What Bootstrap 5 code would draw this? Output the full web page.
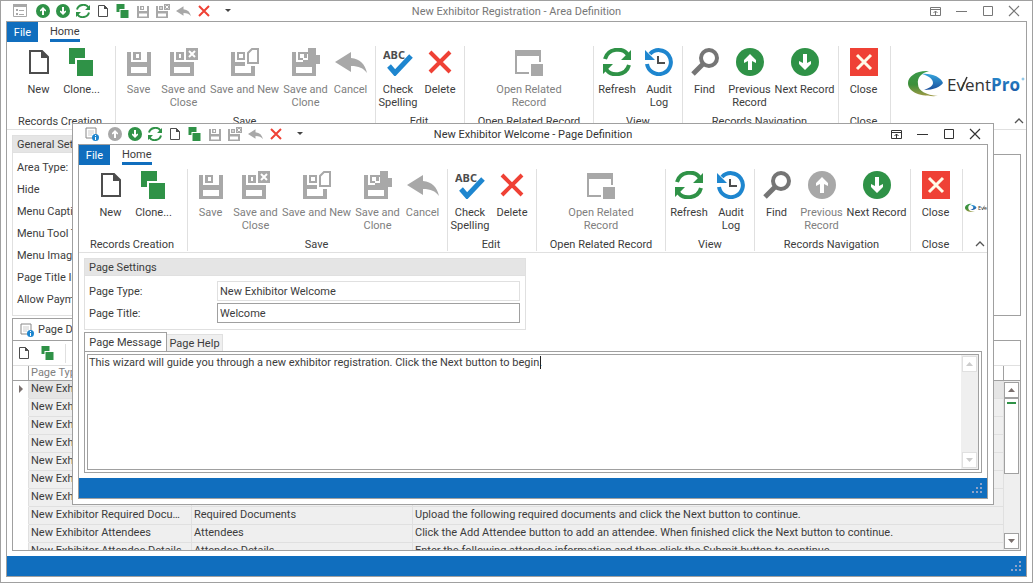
<!DOCTYPE html>
<html lang="en">
<head>
<meta charset="utf-8">
<meta name="viewport" content="width=device-width, initial-scale=1">
<title>New Exhibitor Registration - Area Definition</title>
<link href="https://cdn.jsdelivr.net/npm/bootstrap@5.3.0/dist/css/bootstrap.min.css" rel="stylesheet">
<style>
  :root { --line: #a0a0a0; --soft: #e0e0e0; --fill: #e5e5e5; --blue: #106ebe; --ink: #3c3c3c; --dim: #808080; }
  body { font: 11px/13px Roboto, "Liberation Sans", sans-serif; color: var(--ink); background: #fff; }
  button { font: inherit; color: inherit; background: none; border: 0; padding: 0; }
  svg { display: block; flex: none; }
  .win { border: 1px solid var(--line); background: #fff; padding: 0 5px 5px; overflow: hidden; }
  .win-main { height: 100vh; min-height: 560px; }
  .win-dialog { top: 122px; left: 71px; right: 38px; bottom: 77px; z-index: 10; }
  .titlebar { height: 20px; flex: none; }
  .titlebar h1 { font: inherit; margin: 0; }
  .win-main .titlebar h1, .win-main .win-tools { color: #777; }
  .win-dialog .titlebar h1, .win-dialog .win-tools { color: #333; }
  .quick { gap: 6px; padding-left: 7px; }
  .win-icon { margin-right: 3px; }
  .win-tools { gap: 13px; padding-right: 7px; }
  .frame { border: 1px solid var(--line); min-height: 0; }
  .menu-tabs { height: 20px; flex: none; }
  .file-tab { background: var(--blue); color: #fff; width: 31px; height: 20px; }
  .home-tab { margin-left: 12px; border-bottom: 3px solid var(--blue); height: 20px; padding-top: 3px; color: var(--ink); text-decoration: none; }
  .ribbon { height: 88px; flex: none; padding-top: 4px; border-bottom: 1px solid var(--soft); overflow: hidden; }
  .grp { height: 82px; flex: none; border-right: 1px solid var(--soft); padding: 2px 2px 0 0; text-align: center; }
  .g-108 { width: 109px; } .g-260 { width: 260px; } .g-89 { width: 89px; }
  .g-129 { width: 129px; } .g-156 { width: 156px; } .g-52 { width: 52px; }
  .g-129, .g-view { padding-right: 0; }
  .cmd { display: flex; flex-direction: column; align-items: center; gap: 7px; width: 42px; white-space: nowrap; }
  .cmd:disabled { color: var(--dim); }
  .cmd span { display: flex; flex-direction: column; align-items: center; }
  .w-new { width: 43px; } .w-name { width: 48px; } .w-long { width: 74px; } .w-next { width: 62px; } .w-wide { width: 90px; }
  .collapse-btn { right: 1px; bottom: 4px; }
  .panel { border: 1px solid var(--soft); }
  .panel-head { background: var(--fill); height: 17px; padding-left: 4px; line-height: 17px; border-bottom: 1px solid var(--soft); }
  .body-pad { padding: 5px; min-height: 0; }
  .prop { height: 22px; line-height: 22px; padding-left: 4px; }
  .memo { border: 1px solid var(--line); margin-top: 19px; }
  .pages-tab { border: 1px solid var(--line); border-bottom: 0; height: 22px; width: 120px; margin-top: 2px; padding-left: 7px; flex: none; }
  .grid-box { border: 1px solid var(--line); min-height: 0; overflow: hidden; }
  .grid-tools { height: 25px; border-bottom: 1px solid var(--soft); padding-left: 4px; gap: 10px; flex: none; }
  .tool-sep { height: 19px; border-left: 1px solid var(--soft); }
  .pages { table-layout: fixed; width: 100%; border-collapse: separate; border-spacing: 0; }
  .pages th { height: 15px; font-weight: 400; color: var(--dim); border-bottom: 1px solid var(--line); border-right: 1px solid var(--line); padding: 0 0 0 2px; line-height: 14px; background: #fff; }
  .pages td { height: 18px; line-height: 16px; padding: 0 2px 1px 2px; background: #efefef; border-right: 1px solid var(--soft); border-bottom: 1px solid var(--soft); white-space: nowrap; overflow: hidden; text-overflow: ellipsis; }
  .pages tr.current td { background: var(--fill); }
  .pages tr td:first-child, .pages tr.current td:first-child { background: #fff; border-bottom-color: #fff; padding-left: 5px; }
  .c-mark { width: 16px; } .c-type { width: 163px; } .c-title { width: 221px; }
  .vbar { background: #efefef; flex: none; }
  .vbar button { width: 15px; height: 16px; border: 1px solid var(--line); background: #fff; display: flex; align-items: center; justify-content: center; color: #7a706e; flex: none; }
  .grid-rail { width: 16px; padding-bottom: 1px; }
  .grid-rail-head { height: 15px; background: #fff; border-bottom: 1px solid var(--line); margin-bottom: 1px; flex: none; }
  .thumb { width: 15px; height: 76px; border: 1px solid var(--line); background: #fff; padding: 3px 2px; flex: none; }
  .thumb i { display: block; height: 2px; background: #2f9247; }
  .status { height: 20px; background: var(--blue); flex: none; color: #8fa3c9; }
  .settings { max-width: 442px; }
  .field-row label { width: 132px; padding-left: 4px; flex: none; }
  .field-row input { height: 20px; border: 1px solid var(--line); padding: 0 2px; color: var(--ink); min-width: 0; outline: 0; }
  .field-row input[readonly] { border-color: var(--soft); }
  .fields { padding: 5px 5px 6px 0; gap: 2px; }
  .msg-tabs { margin-top: 2px; margin-bottom: -1px; flex: none; }
  .msg-tabs button { border: 1px solid var(--soft); background: #efefef; width: 56px; height: 18px; border-left: 0; border-bottom: 1px solid var(--line); }
  .msg-tabs button.active { border: 1px solid var(--line); border-bottom-color: #fff; background: #fff; height: 20px; width: 83px; }
  .msg-box { border: 1px solid var(--line); padding: 2px; min-height: 0; }
  .msg-edit { border: 1px solid var(--line); }
  .msg-edit textarea { border: 0; resize: none; outline: 0; padding: 1px; color: var(--ink); overflow: hidden; line-height: 13px; }
  .caret { left: 452px; top: 1px; width: 1px; height: 13px; background: #222; }
  .edit-rail { width: 17px; padding: 1px; }
  .edit-rail button { border-color: var(--soft); color: #ccc; }
  .brand { padding-left: 17px; padding-top: 20px; flex: none; }
  .brand-mini { padding: 33px 0 0 2px; }
  .brand text, .brand-mini text { font-family: "Open Sans", sans-serif; font-size: 17px; }
</style>
</head>
<body>
<svg width="0" height="0" class="position-absolute" aria-hidden="true">
  <defs>
    <linearGradient id="lg1" x1="0" y1="0" x2="0" y2="1"><stop offset="0" stop-color="#3a9a4a"/><stop offset=".55" stop-color="#3c8f3a"/><stop offset="1" stop-color="#a09a45"/></linearGradient>
    <linearGradient id="lg2" x1="0" y1="0" x2="0" y2="1"><stop offset="0" stop-color="#35a4dc"/><stop offset="1" stop-color="#1a4f9c"/></linearGradient>
    <linearGradient id="lg3" x1="0" y1="0" x2="0" y2="1"><stop offset="0" stop-color="#2a93d4"/><stop offset="1" stop-color="#1a4f9c"/></linearGradient>
  </defs>
  <symbol id="doc" viewBox="0 0 28 28"><path d="M5 3h12l6 6v16H5z" fill="#fff" stroke="#4d4d4d" stroke-width="2"/><path d="M16 2v8h8z" fill="#4d4d4d"/></symbol>
  <symbol id="clone" viewBox="0 0 28 28"><path fill="#2f9247" d="M1 0h16v10H7v6H1zM9 12h16v16H9z"/></symbol>
  <symbol id="save" viewBox="0 0 28 28"><path fill="#a8a8a8" fill-rule="evenodd" d="M2 4h4v10h16V4h4v24H2zM6 19v6h16v-6zM8 4h8v8H8zM11 6v4h3V6z"/></symbol>
  <symbol id="saveclose" viewBox="0 0 28 28"><path fill="#a8a8a8" fill-rule="evenodd" d="M0 4h4v10h16v0h4v14H0zM4 19v6h16v-6zM6 4h8v8H6zM9 6v4h2V6z"/><path fill="#a8a8a8" d="M16 0h12v12H16z"/><path d="m19 3 6 6m0-6-6 6" stroke="#fff" stroke-width="2"/></symbol>
  <symbol id="savenew" viewBox="0 0 28 28"><path fill="#a8a8a8" fill-rule="evenodd" d="M0 4h4v10h10v4H4v7h16v-7h4v10H0zM6 4h8v8H6zM8 6v4h4V6z"/><path fill="#fff" stroke="#a8a8a8" stroke-width="2" d="M21 1h6v14H17V5z"/></symbol>
  <symbol id="saveclone" viewBox="0 0 28 28"><path fill="#a8a8a8" fill-rule="evenodd" d="M0 4h4v10h7v-4h5V0h8v7h5v9h-5v12H0zM4 19v6h16v-6zM6 4h10v8H6zM8 6v4h4V6z"/><path fill="#fff" d="M12 10h3V6h1v5h-4z"/></symbol>
  <symbol id="undo" viewBox="0 0 32 28"><path fill="#a8a8a8" d="M0 14 16 4v6c9 1 14 6 16 15-4-5-8-7-16-7v6z"/></symbol>
  <symbol id="spell" viewBox="0 0 30 28"><path d="m6 18 6 7L28 8" fill="none" stroke="#1e86cf" stroke-width="5"/><text x="0" y="11" font-family="Noto Sans" font-weight="700" font-size="11" fill="#4d4d4d">ABC</text></symbol>
  <symbol id="del" viewBox="0 0 28 28"><path d="m4 4 20 20M24 4 4 24" stroke="#ef4135" stroke-width="4"/></symbol>
  <symbol id="related" viewBox="0 0 28 28"><path fill="#a8a8a8" d="M0 2h26v12h-2V8H2v16h12v2H0zM16 16h12v12H16z"/></symbol>
  <symbol id="refresh" viewBox="0 0 28 28"><g fill="none" stroke="#2f9247" stroke-width="4"><path d="M2 11C5 0 20-1 25 7"/><path d="M26 17C23 28 8 29 3 21"/></g><path fill="#2f9247" d="M28 2v10H18zM0 26V16h10z"/></symbol>
  <symbol id="audit" viewBox="0 0 28 28"><path d="M5 6a12 12 0 1 1-3 10" fill="none" stroke="#1e86cf" stroke-width="4"/><path fill="#1e86cf" d="M0 2v10h10z"/><path d="M13 8v7h7" fill="none" stroke="#4d4d4d" stroke-width="2"/></symbol>
  <symbol id="find" viewBox="0 0 28 28"><circle cx="18" cy="10" r="8" fill="none" stroke="#757575" stroke-width="4"/><path d="M12 16 2 26" stroke="#757575" stroke-width="5"/></symbol>
  <symbol id="up" viewBox="0 0 28 28"><circle cx="14" cy="14" r="14" fill="currentColor"/><path fill="#fff" d="m14 6 6 6v3l-4-2v9h-4v-9l-4 2v-3z"/></symbol>
  <symbol id="down" viewBox="0 0 28 28"><circle cx="14" cy="14" r="14" fill="currentColor"/><path fill="#fff" d="m14 22 6-6v-3l-4 2V6h-4v9l-4-2v3z"/></symbol>
  <symbol id="closebox" viewBox="0 0 28 28"><path fill="#ef4135" d="M0 0h28v28H0z"/><path d="m7 7 14 14m0-14L7 21" stroke="#fffbe8" stroke-width="3"/></symbol>
  <symbol id="form" viewBox="0 0 14 14"><path d="M.5.5h13v12H.5z" fill="#fff" stroke="#a8a8a8"/><path fill="#a8a8a8" d="M0 0h14v3H0zM3 5h2v2H3zM3 9h2v2H3zM6 6h5v1H6zM6 10h5v1H6z"/></symbol>
  <symbol id="pageinfo" viewBox="0 0 14 14"><path d="M1 1h10v10H1z" fill="#fff" stroke="#888"/><path d="M3 4h6M3 6h6M3 8h4" stroke="#ccc"/><circle cx="10.500" cy="10.500" r="3.500" fill="#1e86cf"/><path d="M10 8h1v1h-1zM10 10h1v3h-1z" fill="#fff"/></symbol>
  <symbol id="pin" viewBox="0 0 13 13"><path d="M1.500 2.500h10v8h-10zM1 4.500h11M6.500 10V6M4.500 8l2-2 2 2" fill="none" stroke="currentColor"/></symbol>
  <symbol id="min" viewBox="0 0 13 13"><path d="M1 6.500h11" stroke="currentColor"/></symbol>
  <symbol id="max" viewBox="0 0 13 13"><path d="M2.500 1.500h9v9h-9z" fill="none" stroke="currentColor"/></symbol>
  <symbol id="x" viewBox="0 0 13 13"><path d="m2 1 10 10M12 1 2 11" stroke="currentColor" stroke-width="1.200"/></symbol>
  <symbol id="chev" viewBox="0 0 12 8"><path d="m2 6 4-4 4 4" fill="none" stroke="#555" stroke-width="1.300"/></symbol>
  <symbol id="tri" viewBox="0 0 8 4"><path d="M0 0h6L3 3z" fill="#444"/></symbol>
  <symbol id="tu" viewBox="0 0 8 4"><path d="M0 4h7L3.500 0z" fill="currentColor"/></symbol>
  <symbol id="td" viewBox="0 0 8 4"><path d="M0 0h7L3.500 4z" fill="currentColor"/></symbol>
  <symbol id="grip" viewBox="0 0 12 12"><path fill="currentColor" d="M9 1h2v2H9zM5 5h2v2H5zM9 5h2v2H9zM1 9h2v2H1zM5 9h2v2H5zM9 9h2v2H9z"/></symbol>
  <symbol id="swirl" viewBox="0 0 36 28"><path fill="url(#lg1)" d="M21 1C9 0 0 6 0 13c0 9 12 14 30 13-12-1-20-5-20-12C9 8 13 3 21 1z"/><path fill="url(#lg2)" d="M14 4c9-1 19 3 21 9-3 4-9 7-19 7 5-2 9-4 9-7 0-4-4-7-11-9z"/></symbol>
</svg>

<main class="win win-main position-relative d-flex flex-column">
  <header class="titlebar d-flex align-items-center position-relative">
    <div class="quick d-flex align-items-center">
      <svg class="win-icon" width="14" height="14"><use href="#form"/></svg>
      <button aria-label="Previous" style="color:#2f9247"><svg width="14" height="14"><use href="#up"/></svg></button>
      <button aria-label="Next" style="color:#2f9247"><svg width="14" height="14"><use href="#down"/></svg></button>
      <button aria-label="Refresh"><svg width="14" height="14"><use href="#refresh"/></svg></button>
      <button aria-label="New"><svg width="14" height="14"><use href="#doc"/></svg></button>
      <button aria-label="Clone"><svg width="14" height="14"><use href="#clone"/></svg></button>
      <button aria-label="Save"><svg width="14" height="14"><use href="#save"/></svg></button>
      <button aria-label="Save and Close"><svg width="14" height="14"><use href="#saveclose"/></svg></button>
      <button aria-label="Cancel"><svg width="15" height="14"><use href="#undo"/></svg></button>
      <button aria-label="Delete"><svg width="14" height="14"><use href="#del"/></svg></button>
      <button aria-label="Customize" class="ms-2"><svg width="8" height="4"><use href="#tri"/></svg></button>
    </div>
    <h1 class="position-absolute start-50 translate-middle-x">New Exhibitor Registration - Area Definition</h1>
    <div class="win-tools d-flex ms-auto">
      <button aria-label="Pin"><svg width="13" height="13"><use href="#pin"/></svg></button>
      <button aria-label="Minimize"><svg width="13" height="13"><use href="#min"/></svg></button>
      <button aria-label="Maximize"><svg width="13" height="13"><use href="#max"/></svg></button>
      <button aria-label="Close window"><svg width="13" height="13"><use href="#x"/></svg></button>
    </div>
  </header>
  <div class="frame d-flex flex-column flex-grow-1">
    <nav class="menu-tabs d-flex">
      <button class="file-tab">File</button>
      <a href="#" class="home-tab">Home</a>
    </nav>
    <section class="ribbon d-flex position-relative">
      <div class="grp g-108 d-flex flex-column justify-content-between">
        <div class="d-flex justify-content-center">
          <button class="cmd w-new"><svg width="28" height="28"><use href="#doc"/></svg><span>New</span></button>
          <button class="cmd w-new"><svg width="28" height="28"><use href="#clone"/></svg><span>Clone...</span></button>
        </div>
        <div>Records Creation</div>
      </div>
      <div class="grp g-260 d-flex flex-column justify-content-between">
        <div class="d-flex justify-content-center">
          <button class="cmd" disabled><svg width="28" height="28"><use href="#save"/></svg><span>Save</span></button>
          <button class="cmd w-name" disabled><svg width="28" height="28"><use href="#saveclose"/></svg><span>Save and<br>Close</span></button>
          <button class="cmd w-long" disabled><svg width="28" height="28"><use href="#savenew"/></svg><span>Save and New</span></button>
          <button class="cmd w-name" disabled><svg width="28" height="28"><use href="#saveclone"/></svg><span>Save and<br>Clone</span></button>
          <button class="cmd" disabled><svg width="32" height="28"><use href="#undo"/></svg><span>Cancel</span></button>
        </div>
        <div>Save</div>
      </div>
      <div class="grp g-89 d-flex flex-column justify-content-between">
        <div class="d-flex justify-content-center">
          <button class="cmd"><svg width="30" height="28"><use href="#spell"/></svg><span>Check<br>Spelling</span></button>
          <button class="cmd"><svg width="28" height="28"><use href="#del"/></svg><span>Delete</span></button>
        </div>
        <div>Edit</div>
      </div>
      <div class="grp g-129 d-flex flex-column justify-content-between">
        <div class="d-flex justify-content-center">
          <button class="cmd w-wide" disabled><svg width="28" height="28"><use href="#related"/></svg><span>Open Related<br>Record</span></button>
        </div>
        <div>Open Related Record</div>
      </div>
      <div class="grp g-89 g-view d-flex flex-column justify-content-between">
        <div class="d-flex justify-content-center">
          <button class="cmd"><svg width="28" height="28"><use href="#refresh"/></svg><span>Refresh</span></button>
          <button class="cmd"><svg width="28" height="28"><use href="#audit"/></svg><span>Audit<br>Log</span></button>
        </div>
        <div>View</div>
      </div>
      <div class="grp g-156 d-flex flex-column justify-content-between">
        <div class="d-flex justify-content-center">
          <button class="cmd"><svg width="28" height="28"><use href="#find"/></svg><span>Find</span></button>
          <button class="cmd w-name"><svg width="28" height="28" color="#2f9247"><use href="#up"/></svg><span>Previous<br>Record</span></button>
          <button class="cmd w-next"><svg width="28" height="28" color="#2f9247"><use href="#down"/></svg><span>Next Record</span></button>
        </div>
        <div>Records Navigation</div>
      </div>
      <div class="grp g-52 d-flex flex-column justify-content-between">
        <div class="d-flex justify-content-center">
          <button class="cmd"><svg width="28" height="28"><use href="#closebox"/></svg><span>Close</span></button>
        </div>
        <div>Close</div>
      </div>
      <div class="brand">
        <svg width="118" height="36" viewBox="0 0 118 36" role="img" aria-label="EventPro">
          <use href="#swirl" x="0" y="4" width="36" height="28"/>
          <text x="39" y="25" fill="#333">Event<tspan fill="url(#lg3)" font-weight="700">Pro</tspan></text>
          <path d="m53 24 6-13" stroke="#333" stroke-width="1.500"/>
          <circle cx="115" cy="13" r="1" fill="none" stroke="#2a93d4" stroke-width=".6"/>
        </svg>
      </div>
      <button class="collapse-btn position-absolute" aria-label="Collapse ribbon"><svg width="12" height="8"><use href="#chev"/></svg></button>
    </section>

    <div class="body-pad d-flex flex-column flex-grow-1">
      <div class="d-flex gap-2">
        <section class="panel w-50">
          <div class="panel-head">General Settings</div>
          <div class="pt-1 pb-1">
            <div class="prop">Area Type:</div>
            <div class="prop">Hide</div>
            <div class="prop">Menu Caption:</div>
            <div class="prop">Menu Tool Tip:</div>
            <div class="prop">Menu Image:</div>
            <div class="prop">Page Title Image:</div>
            <div class="prop">Allow Payment:</div>
          </div>
        </section>
        <div class="memo flex-grow-1"></div>
      </div>
      <div class="pages-tab d-flex align-items-center gap-1"><svg width="14" height="14"><use href="#pageinfo"/></svg><span>Page Definitions</span></div>
      <div class="grid-box d-flex flex-column flex-grow-1">
        <div class="grid-tools d-flex align-items-center">
          <button aria-label="New page"><svg width="14" height="14"><use href="#doc"/></svg></button>
          <button aria-label="Clone page"><svg width="14" height="14"><use href="#clone"/></svg></button>
          <span class="tool-sep"></span>
        </div>
        <div class="d-flex flex-grow-1 overflow-hidden">
          <div class="flex-grow-1 overflow-hidden">
            <table class="pages">
              <colgroup><col class="c-mark"><col class="c-type"><col class="c-title"><col></colgroup>
              <thead><tr><th></th><th>Page Type</th><th>Page Title</th><th>Page Message</th></tr></thead>
              <tbody>
                <tr class="current"><td><svg width="6" height="8"><path d="M1 0v8l4-4z" fill="#7a706e"/></svg></td><td>New Exhibitor Welcome</td><td>Welcome</td><td></td></tr>
                <tr><td></td><td>New Exhibitor Company</td><td>Company</td><td></td></tr>
                <tr><td></td><td>New Exhibitor Contact</td><td>Contact</td><td></td></tr>
                <tr><td></td><td>New Exhibitor Details</td><td>Details</td><td></td></tr>
                <tr><td></td><td>New Exhibitor Booths</td><td>Booths</td><td></td></tr>
                <tr><td></td><td>New Exhibitor Items</td><td>Items</td><td></td></tr>
                <tr><td></td><td>New Exhibitor Payment</td><td>Payment</td><td></td></tr>
                <tr><td></td><td>New Exhibitor Required Documents</td><td>Required Documents</td><td>Upload the following required documents and click the Next button to continue.</td></tr>
                <tr><td></td><td>New Exhibitor Attendees</td><td>Attendees</td><td>Click the Add Attendee button to add an attendee. When finished click the Next button to continue.</td></tr>
                <tr><td></td><td>New Exhibitor Attendee Details</td><td>Attendee Details</td><td>Enter the following attendee information and then click the Submit button to continue.</td></tr>
              </tbody>
            </table>
          </div>
          <div class="vbar grid-rail d-flex flex-column">
            <div class="grid-rail-head"></div>
            <button aria-label="Scroll up"><svg width="8" height="4"><use href="#tu"/></svg></button>
            <div class="thumb"><i></i></div>
            <button class="mt-auto" aria-label="Scroll down"><svg width="8" height="4"><use href="#td"/></svg></button>
          </div>
        </div>
      </div>
    </div>
    <footer class="status d-flex justify-content-end align-items-center pe-1"><svg width="12" height="12"><use href="#grip"/></svg></footer>
  </div>

  <section class="win win-dialog position-absolute d-flex flex-column" role="dialog" aria-label="New Exhibitor Welcome - Page Definition">
    <header class="titlebar d-flex align-items-center position-relative">
      <div class="quick d-flex align-items-center">
        <svg class="win-icon" width="14" height="14"><use href="#pageinfo"/></svg>
        <button aria-label="Previous" disabled style="color:#a8a8a8"><svg width="14" height="14"><use href="#up"/></svg></button>
        <button aria-label="Next" style="color:#2f9247"><svg width="14" height="14"><use href="#down"/></svg></button>
        <button aria-label="Refresh"><svg width="14" height="14"><use href="#refresh"/></svg></button>
        <button aria-label="New"><svg width="14" height="14"><use href="#doc"/></svg></button>
        <button aria-label="Clone"><svg width="14" height="14"><use href="#clone"/></svg></button>
        <button aria-label="Save"><svg width="14" height="14"><use href="#save"/></svg></button>
        <button aria-label="Save and Close"><svg width="14" height="14"><use href="#saveclose"/></svg></button>
        <button aria-label="Cancel"><svg width="15" height="14"><use href="#undo"/></svg></button>
        <button aria-label="Delete"><svg width="14" height="14"><use href="#del"/></svg></button>
        <button aria-label="Customize" class="ms-2"><svg width="8" height="4"><use href="#tri"/></svg></button>
      </div>
      <h1 class="position-absolute start-50 translate-middle-x">New Exhibitor Welcome - Page Definition</h1>
      <div class="win-tools d-flex ms-auto">
        <button aria-label="Pin"><svg width="13" height="13"><use href="#pin"/></svg></button>
        <button aria-label="Minimize"><svg width="13" height="13"><use href="#min"/></svg></button>
        <button aria-label="Maximize"><svg width="13" height="13"><use href="#max"/></svg></button>
        <button aria-label="Close window"><svg width="13" height="13"><use href="#x"/></svg></button>
      </div>
    </header>
    <div class="frame d-flex flex-column flex-grow-1">
      <nav class="menu-tabs d-flex">
        <button class="file-tab">File</button>
        <a href="#" class="home-tab">Home</a>
      </nav>
      <section class="ribbon d-flex position-relative">
        <div class="grp g-108 d-flex flex-column justify-content-between">
          <div class="d-flex justify-content-center">
            <button class="cmd w-new"><svg width="28" height="28"><use href="#doc"/></svg><span>New</span></button>
            <button class="cmd w-new"><svg width="28" height="28"><use href="#clone"/></svg><span>Clone...</span></button>
          </div>
          <div>Records Creation</div>
        </div>
        <div class="grp g-260 d-flex flex-column justify-content-between">
          <div class="d-flex justify-content-center">
            <button class="cmd" disabled><svg width="28" height="28"><use href="#save"/></svg><span>Save</span></button>
            <button class="cmd w-name" disabled><svg width="28" height="28"><use href="#saveclose"/></svg><span>Save and<br>Close</span></button>
            <button class="cmd w-long" disabled><svg width="28" height="28"><use href="#savenew"/></svg><span>Save and New</span></button>
            <button class="cmd w-name" disabled><svg width="28" height="28"><use href="#saveclone"/></svg><span>Save and<br>Clone</span></button>
            <button class="cmd" disabled><svg width="32" height="28"><use href="#undo"/></svg><span>Cancel</span></button>
          </div>
          <div>Save</div>
        </div>
        <div class="grp g-89 d-flex flex-column justify-content-between">
          <div class="d-flex justify-content-center">
            <button class="cmd"><svg width="30" height="28"><use href="#spell"/></svg><span>Check<br>Spelling</span></button>
            <button class="cmd"><svg width="28" height="28"><use href="#del"/></svg><span>Delete</span></button>
          </div>
          <div>Edit</div>
        </div>
        <div class="grp g-129 d-flex flex-column justify-content-between">
          <div class="d-flex justify-content-center">
            <button class="cmd w-wide" disabled><svg width="28" height="28"><use href="#related"/></svg><span>Open Related<br>Record</span></button>
          </div>
          <div>Open Related Record</div>
        </div>
        <div class="grp g-89 g-view d-flex flex-column justify-content-between">
          <div class="d-flex justify-content-center">
            <button class="cmd"><svg width="28" height="28"><use href="#refresh"/></svg><span>Refresh</span></button>
            <button class="cmd"><svg width="28" height="28"><use href="#audit"/></svg><span>Audit<br>Log</span></button>
          </div>
          <div>View</div>
        </div>
        <div class="grp g-156 d-flex flex-column justify-content-between">
          <div class="d-flex justify-content-center">
            <button class="cmd"><svg width="28" height="28"><use href="#find"/></svg><span>Find</span></button>
            <button class="cmd w-name" disabled><svg width="28" height="28" color="#a8a8a8"><use href="#up"/></svg><span>Previous<br>Record</span></button>
            <button class="cmd w-next"><svg width="28" height="28" color="#2f9247"><use href="#down"/></svg><span>Next Record</span></button>
          </div>
          <div>Records Navigation</div>
        </div>
        <div class="grp g-52 d-flex flex-column justify-content-between">
          <div class="d-flex justify-content-center">
            <button class="cmd"><svg width="28" height="28"><use href="#closebox"/></svg><span>Close</span></button>
          </div>
          <div>Close</div>
        </div>
        <div class="brand-mini">
          <svg width="39" height="12" viewBox="0 0 118 36" role="img" aria-label="EventPro">
            <use href="#swirl" x="0" y="4" width="36" height="28"/>
            <text x="39" y="25" fill="#333">Event<tspan fill="#1b63ad" font-weight="700">Pro</tspan></text>
            <path d="m53 24 6-13" stroke="#333" stroke-width="1.500"/>
          </svg>
        </div>
        <button class="collapse-btn position-absolute" aria-label="Collapse ribbon"><svg width="12" height="8"><use href="#chev"/></svg></button>
      </section>

      <div class="body-pad d-flex flex-column flex-grow-1">
        <section class="panel settings">
          <div class="panel-head">Page Settings</div>
          <div class="fields d-flex flex-column">
            <div class="field-row d-flex align-items-center"><label for="ptype">Page Type:</label><input id="ptype" class="flex-grow-1" value="New Exhibitor Welcome" readonly></div>
            <div class="field-row d-flex align-items-center"><label for="ptitle">Page Title:</label><input id="ptitle" class="flex-grow-1" value="Welcome"></div>
          </div>
        </section>
        <div class="msg-tabs d-flex align-items-end">
          <button class="active">Page Message</button>
          <button>Page Help</button>
        </div>
        <div class="msg-box d-flex flex-grow-1">
          <div class="msg-edit d-flex flex-grow-1 position-relative">
            <textarea class="flex-grow-1" aria-label="Page Message" spellcheck="false">This wizard will guide you through a new exhibitor registration. Click the Next button to begin.</textarea>
            <span class="caret position-absolute"></span>
            <div class="vbar edit-rail d-flex flex-column justify-content-between">
              <button aria-label="Scroll up"><svg width="8" height="4"><use href="#tu"/></svg></button>
              <button aria-label="Scroll down"><svg width="8" height="4"><use href="#td"/></svg></button>
            </div>
          </div>
        </div>
      </div>
      <footer class="status d-flex justify-content-end align-items-center pe-1"><svg width="12" height="12"><use href="#grip"/></svg></footer>
    </div>
  </section>
</main>
<script src="https://cdn.jsdelivr.net/npm/bootstrap@5.3.0/dist/js/bootstrap.bundle.min.js"></script>
</body>
</html>
